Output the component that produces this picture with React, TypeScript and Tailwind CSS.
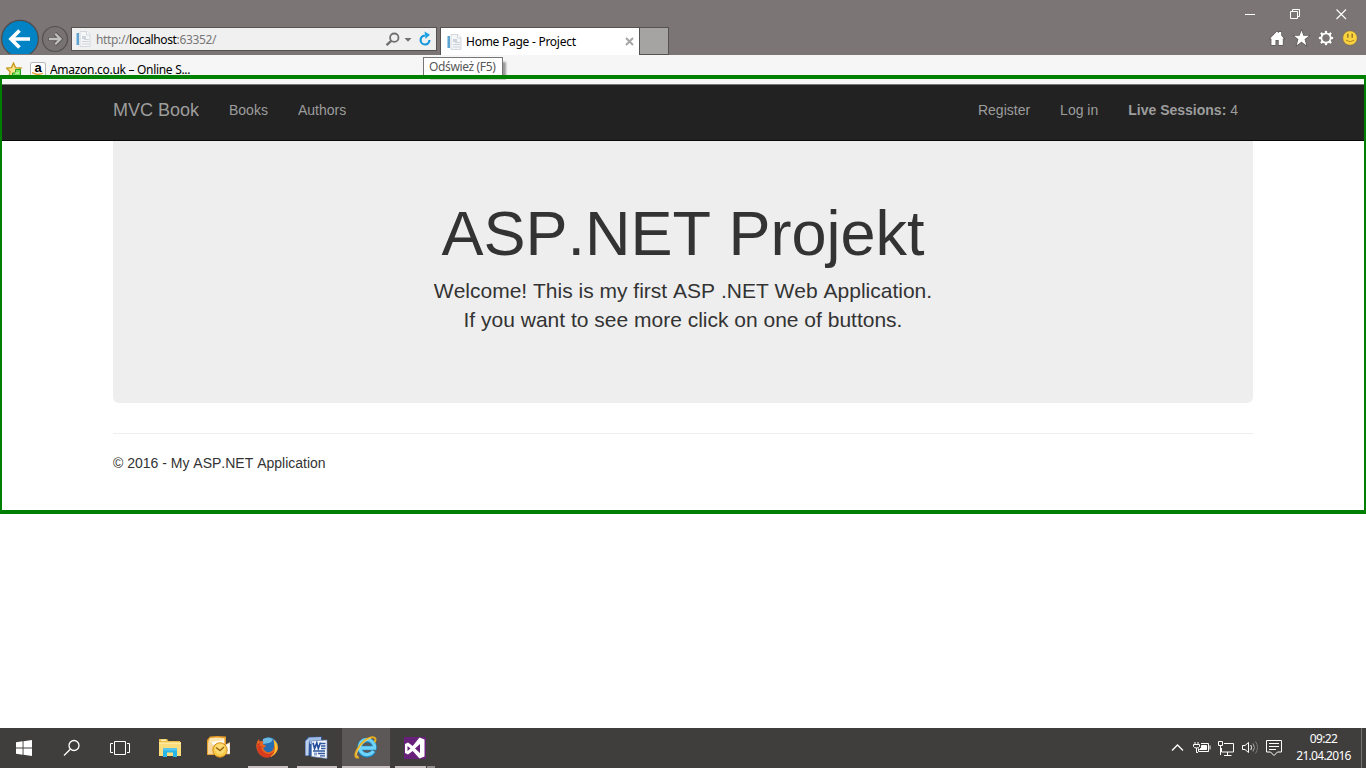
import React from "react";

const UI = "font-['Noto_Sans','Open_Sans',sans-serif]";

function PageIcon() {
  return (
    <svg width="16" height="16" viewBox="0 0 16 16" className="block shrink-0">
      <path d="M5 .5h7l3 3v12H5z" fill="#f4f6f8" stroke="#d3d8de" />
      <path d="M11.500 .5v3.500h3.500" fill="#fff" stroke="#cfd5dc" />
      <path d="M1 2h3v12H1z" fill="#5ea3cf" />
      <path d="M1 2h1v12H1z" fill="#a9cfe8" />
      <path d="M7 5h4v3H7zM7 10h7v1H7zM7 12.500h7v1H7zM9 8h5v1H9z" fill="#cdd3da" />
    </svg>
  );
}

function BackIcon() {
  return (
    <svg width="40" height="36" viewBox="0 0 40 36" className="block shrink-0">
      <circle cx="20" cy="19.700" r="18.300" fill="#0083c5" stroke="#4f4b4b" strokeWidth="1.200" />
      <path d="M30 20H12M19.500 11.500L11 20l8.500 8.500" fill="none" stroke="#fff" strokeWidth="3.700" />
      <path d="M0 35.500h40" stroke="#7c7575" />
    </svg>
  );
}

function ForwardIcon() {
  return (
    <svg width="28" height="28" viewBox="0 0 28 28" className="block shrink-0">
      <circle cx="14" cy="14" r="12.500" fill="#787272" stroke="#545050" strokeWidth="1.200" />
      <path d="M7.500 14H19M14 8.500l5.500 5.500-5.500 5.500" fill="none" stroke="#575353" strokeWidth="4" />
      <path d="M8 14H19.500M14.200 8.800l5.300 5.200-5.300 5.200" fill="none" stroke="#c1bebe" strokeWidth="2.300" />
    </svg>
  );
}

function AddressIcons() {
  return (
    <svg width="51" height="22" viewBox="0 0 51 22" className="block shrink-0">
      <circle cx="9.300" cy="9.700" r="4.200" fill="none" stroke="#6f6f6f" strokeWidth="1.800" />
      <path d="M6.500 12.700L1.500 17.200" stroke="#6f6f6f" strokeWidth="2.400" />
      <path d="M19.500 10h7L23 13.800z" fill="#707070" />
      <path d="M39.800 7.700a4.400 4.400 0 1 0 4.600 4.300" fill="none" stroke="#1598db" strokeWidth="2.200" />
      <path d="M39.500 3.500l5.500 3.200-4.500 4z" fill="#1da3e5" />
    </svg>
  );
}

function WindowControls() {
  return (
    <svg width="106" height="12" viewBox="0 0 106 12" className="block" fill="none" stroke="#fff">
      <path d="M0 6.500h10" />
      <path d="M45.500 3.500h7v7h-7zM47.500 3.500v-2h7v7h-2" />
      <path d="M91.500 1.500l9.500 9.500M101 1.500L91.500 11" strokeWidth="1.100" />
    </svg>
  );
}

function ToolIcons() {
  return (
    <svg width="90" height="18" viewBox="0 0 90 18" className="block">
      <g fill="#fff" stroke="#5d5858" strokeWidth="1.400" style={{ paintOrder: "stroke" }}>
        <path d="M1 9.500L8 2.500l1.900 1.800V3H12.200v3.500l2.800 3h-1.200V16H9.700v-5H6.500v5H2.400V9.500z" />
        <path d="M32.500 1.500l1.900 5.200h5.600l-4.400 3.600 1.700 6-4.800-3.500-4.800 3.500 1.700-6L25 6.700h5.600z" />
      </g>
      <g stroke="#5d5858" strokeWidth="3.700">
        <path d="M57 1.500v15M49.500 9h15M51.700 3.700l10.600 10.600M62.300 3.700L51.700 14.300" />
      </g>
      <g stroke="#fff" strokeWidth="2.500">
        <path d="M57 1.800v14.400M49.800 9h14.400M51.900 3.900l10.200 10.200M62.100 3.900l-10.200 10.200" />
      </g>
      <circle cx="57" cy="9" r="4.500" fill="#7c7575" stroke="#fff" strokeWidth="2" />
      <circle cx="57" cy="9" r="3.500" fill="#7c7575" />
      <circle cx="81" cy="9" r="7.300" fill="#fbd33f" stroke="#77664f" strokeWidth=".7" />
      <path d="M78.800 4.700v4M83.200 4.700v4" stroke="#957928" strokeWidth="1.500" />
      <path d="M76.800 11.200q4.200 3 8.400 0" fill="none" stroke="#b38a23" />
    </svg>
  );
}

function FavoriteStar() {
  return (
    <svg width="17" height="15" viewBox="0 0 17 15" className="block shrink-0">
      <path d="M7.500 1l2 4.600 5.500.5-4.200 3.700 1.500 5.700-4.800-3-4.800 3 1.400-5.700L.5 6.100l5-.5z" fill="#fbe28a" stroke="#c59a20" strokeWidth="1.300" />
      <path d="M9.500 7.500h5v7h-8V11h3z" fill="#7ee25c" stroke="#25a01c" />
      <path d="M9 11h4" stroke="#d5ffc5" />
    </svg>
  );
}

function AmazonIcon() {
  return (
    <span className="block h-[16px] w-[16px] shrink-0 rounded-[2px] border border-[#b9b9b9] bg-white text-center font-['Liberation_Sans',sans-serif] text-[13px] leading-[9px] font-bold text-black">
      a
      <svg width="12" height="4" viewBox="0 0 12 4" className="mx-auto block">
        <path d="M0 .5q6 3.500 11 .5" fill="none" stroke="#ed9b31" strokeWidth="1.300" />
      </svg>
    </span>
  );
}

function WindowsIcon() {
  return (
    <svg width="16" height="16" viewBox="0 0 16 16">
      <path d="M0 2.200l6.600-.9v6.200H0zM7.500 1.200L16 0v7.500H7.500zM0 8.500h6.600v6.200L0 13.800zM7.500 8.500H16V16l-8.500-1.200z" fill="#fff" />
    </svg>
  );
}

function SearchIcon() {
  return (
    <svg width="18" height="18" viewBox="0 0 18 18" fill="none" stroke="#fff" strokeWidth="1.300">
      <circle cx="11" cy="6.500" r="5" />
      <path d="M7.300 10.200L1 16.500" />
    </svg>
  );
}

function TaskViewIcon() {
  return (
    <svg width="20" height="16" viewBox="0 0 20 16" fill="none" stroke="#fff">
      <path d="M4.500 1.500h11v13h-11zM3 3.500H.5v9H3M17 3.500h2.500v9H17" />
    </svg>
  );
}

function FolderIcon() {
  return (
    <svg width="22" height="20" viewBox="0 0 22 20">
      <path d="M0 1h8l1.500 2H21v15H0z" fill="#e9bd49" />
      <path d="M0 4h22v14H0z" fill="#fbdc7c" />
      <path d="M2 1.500h5V3H2z" fill="#f8eeb6" />
      <path d="M0 5h22v1H0z" fill="#fde9a2" />
      <path d="M4 10h14v9h-4v-4.500H8V19H4z" fill="#28b5e8" />
      <path d="M4 10h14v2.500H4z" fill="#55c5ee" />
    </svg>
  );
}

function OutlookIcon() {
  return (
    <svg width="24" height="24" viewBox="0 0 24 24">
      <path d="M4 .5q7-1 16 0V19H1V4z" fill="#e79a22" />
      <path d="M4 2q6-1 14.500 0v15H2.500V5z" fill="#fce5af" />
      <path d="M6 6l12-2v9H6z" fill="#fffaf0" />
      <path d="M2 6.500l11 5.500 11-5.500V18H2z" fill="#fff" stroke="#e0b969" strokeWidth=".6" />
      <path d="M2 7v11h6V10z" fill="#f9d79b" />
      <circle cx="14" cy="14" r="7.200" fill="#f8cb48" stroke="#d68b18" />
      <circle cx="14" cy="12.800" r="5.200" fill="#fbdb70" />
      <path d="M10 11.500l4 3 4-3.500" fill="none" stroke="#986315" strokeWidth="1.400" />
    </svg>
  );
}

function FirefoxIcon() {
  return (
    <svg width="24" height="24" viewBox="0 0 24 24">
      <circle cx="14" cy="10.500" r="9.300" fill="#266db1" />
      <path d="M8 3q5-3 10 0-1 3-4 4L8 8z" fill="#6bbbe3" />
      <path d="M1.500 8Q2 5 4 3l.5 2.500Q6.500 4.500 8.500 5.300L7.600 8l3.800 2-3.200 2Q10 17 15 16q4.500-2 4-8l1.500 2q0-4-2.500-7 5 3.500 5.200 9A10.800 11 0 1 1 1.500 8z" fill="#e56620" />
      <path d="M2.200 8l3-1.200L4.800 10l3 .5L6 12q2 5.500 8 6 5-1 7-5-1.500 8-8.500 8.800Q1 21 2.200 8z" fill="#d63d1f" />
      <path d="M18.500 3.500Q23 7 22.500 13q-2 6-7.500 8 5.500-4.500 5-9z" fill="#fbc532" />
    </svg>
  );
}

function WordIcon() {
  return (
    <svg width="24" height="24" viewBox="0 0 24 24">
      <path d="M4 1l14-.5 1 18L1 20V4.500z" fill="#2f589f" />
      <path d="M4.500 1.500l12.500-.5V8H6z" fill="#9ebbe3" />
      <path d="M1.500 5L5 2 4.500 19.500h-3z" fill="#bed0eb" />
      <path d="M7.500 5l15.500-1v18.500l-15.500-2z" fill="#f8faff" stroke="#6c88ba" strokeWidth=".7" />
      <path d="M9 6.800l1.600 5.700 2.200-5.500 1.500 5.500 2.200-6" fill="none" stroke="#254f9d" strokeWidth="1.700" />
      <path d="M17 7.500h4.500M17 10h4.500M17 12.500h4.500M9 15h12M14 17.500h7M16 19.800h5" stroke="#2f589f" strokeWidth="1.300" />
      <path d="M10 16.500h3v3h-3z" fill="#8aa5d0" />
    </svg>
  );
}

function ExplorerIcon() {
  return (
    <svg width="24" height="24" viewBox="0 0 24 24">
      <path d="M19.700 15A7.500 7.500 0 1 1 20.500 12H7" fill="none" stroke="#1689c8" strokeWidth="4.600" />
      <path d="M19.500 15A7.500 7.500 0 1 1 20.500 12H7" fill="none" stroke="#6fd2f8" strokeWidth="3.300" />
      <path d="M5 21.500Q-1 22.500 3 14 9 3 18 1.300q5-.5 2.700 5" fill="none" stroke="#e6ad1d" strokeWidth="2" />
      <path d="M4 20.500Q1 20 4 14 10 4 17 2" fill="none" stroke="#ffe079" strokeWidth=".8" />
    </svg>
  );
}

function StudioIcon() {
  return (
    <svg width="22" height="22" viewBox="0 0 22 22">
      <path d="M0 0h22v22H0z" fill="#68217a" />
      <path d="M15.500 .5L20.500 2.500v17l-5 2L8.700 14 4 17.500l-3-1.500V7l3-1.500 4.700 3.500zM16 7l-5 4.500 5 4.500zM3.500 9v5L6.500 11.500z" fill="#fff" fillRule="evenodd" />
    </svg>
  );
}

function TrayIcons() {
  return (
    <svg width="112" height="20" viewBox="0 0 112 20" className="block" fill="none" stroke="#fff">
      <path d="M2 12.500L7.500 7l5.500 5.500" strokeWidth="1.300" />
      <path d="M25 4v2.500M28 4v2.500M23.500 6.500h6v2q-.7 1.500-3 1.500t-3-1.500zM26.500 10v4.500H28" />
      <path d="M31 5.500h7.500v8H28.500v-3M40 7.500v4" />
      <path d="M31.500 7.500h5v4h-7l2-2z" fill="#fff" />
      <path d="M54 5.500h9.500v8.500H51.500V10M48.500 3.500h4v4h-4zM50.500 7.500V17M57.500 14v3M54 17.500h7.500" />
      <path d="M72.500 7.500h2.500l3.500-3v10l-3.500-3h-2.500z" />
      <path d="M80.800 7q1.600 2.500 0 5" />
      <path d="M83 5.500q3 4 0 8" stroke="#aaa" />
      <path d="M85.500 3.500q4 6 0 12" stroke="#7b7979" />
      <path d="M96.500 2.500h15v11.500h-4L104 17.500 100.500 14h-4z" />
      <path d="M99 5.500h10M99 8.500h10M99 11.500h7" />
    </svg>
  );
}

function TaskButton({ children, wide = false, className = "" }: { children: React.ReactNode; wide?: boolean; className?: string }) {
  return (
    <div className={`relative flex h-10 items-center justify-center ${wide ? "w-[49px]" : "w-12"} ${className}`}>
      {children}
    </div>
  );
}

export default function App() {
  return (
    <div className="flex h-[768px] w-[1366px] flex-col overflow-hidden bg-white font-['Liberation_Sans',sans-serif]">
      <header className={`flex h-[55px] shrink-0 bg-[#7c7575] ${UI}`}>
        <div className="flex h-full items-end">
          <BackIcon />
          <div className="mb-[2px] w-[31px] pl-px"><ForwardIcon /></div>
          <div className="mb-[4px] flex h-[24px] w-[366px] items-center border border-[#565252] bg-[#f0f0f0]">
            <div className="ml-[3px]"><PageIcon /></div>
            <span className="ml-[5px] pt-[2px] text-[12px] leading-[22px] tracking-[-0.36px] text-[#777]">
              http://<span className="text-black">localhost</span>:63352/
            </span>
            <div className="ml-auto"><AddressIcons /></div>
          </div>
          <div className="ml-[3px] flex h-[28px] w-[200px] items-center border border-b-0 border-[#565252] bg-white">
            <div className="ml-[5px]"><PageIcon /></div>
            <span className="ml-[4px] text-[12px] leading-[22px] tracking-[-0.26px] text-black">Home Page - Project</span>
            <svg width="9" height="9" viewBox="0 0 9 9" className="mr-[5px] ml-auto">
              <path d="M1 1l7 7M8 1L1 8" stroke="#a6a6a6" strokeWidth="2" />
            </svg>
          </div>
          <div className="h-[28px] w-[29px] border border-l-0 border-[#565252] bg-[#a5a4a3]" />
        </div>
        <div className="ml-auto flex flex-col items-end">
          <div className="mt-[8px] mr-[15px]"><WindowControls /></div>
          <div className="mt-[9px] mr-[7px]"><ToolIcons /></div>
        </div>
      </header>

      <div className={`relative flex h-5 shrink-0 overflow-hidden bg-[#f6f6f6] ${UI}`}>
        <div className="mt-[7px] ml-[6px]"><FavoriteStar /></div>
        <div className="mt-[7px] ml-[7px]"><AmazonIcon /></div>
        <span className="mt-[10px] ml-[4px] h-[10px] text-[12px] leading-[10px] tracking-[-0.3px] text-black">Amazon.co.uk – Online S...</span>
        <div className="absolute top-[2px] left-[423px] h-[23px] w-[80px] border border-[#767676] bg-white pl-[5px] text-[12px] leading-[18px] tracking-[-0.36px] whitespace-nowrap text-[#575757] shadow-[3px_5px_2px_#999]">
          Odśwież (F5)
        </div>
      </div>

      <div className="flex h-[439px] shrink-0 flex-col border-x-2 border-y-4 border-[#008000] bg-white">
        <div className="flex h-[6px] shrink-0 border-b border-[#777] bg-[#f8f8f8]">
          <div className="ml-[428px] h-[1px] w-[76px] bg-[#d0d0d0]" />
        </div>
        <nav className="flex h-14 shrink-0 items-start border-b border-[#080808] bg-[#222] pt-[15px] text-[14px] leading-5 text-[#9d9d9d]">
          <span className="ml-[111px] w-[116px] text-[18px]">MVC Book</span>
          <span className="w-[69px]">Books</span>
          <span>Authors</span>
          <div className="mr-[126px] ml-auto flex gap-[30px]">
            <span>Register</span>
            <span>Log in</span>
            <span><b>Live Sessions:</b> 4</span>
          </div>
        </nav>
        <main className="mx-[111px] [font-kerning:none]">
          <section className="h-[262px] rounded-b-[6px] bg-[#eee] pt-[57px] text-center text-[#333]">
            <h1 className="text-[63px] leading-[70px]">ASP.NET Projekt</h1>
            <p className="mt-[8px] text-[21px] leading-[29px]">
              Welcome! This is my first ASP .NET Web Application.
              <br />
              If you want to see more click on one of buttons.
            </p>
          </section>
          <footer className="mt-[30px] border-t border-[#eee] pt-[19px] text-[14px] leading-5 text-[#333]">
            © 2016 - My ASP.NET Application
          </footer>
        </main>
      </div>

      <div className={`mt-auto flex h-10 shrink-0 bg-[#403e3d] ${UI}`}>
        <TaskButton><WindowsIcon /></TaskButton>
        <TaskButton><SearchIcon /></TaskButton>
        <TaskButton><TaskViewIcon /></TaskButton>
        <TaskButton className="ml-[2px]"><FolderIcon /></TaskButton>
        <TaskButton><OutlookIcon /></TaskButton>
        <TaskButton wide>
          <FirefoxIcon />
          <i className="absolute bottom-0 left-[6px] h-[2px] w-10 bg-[#c8bfbf]" />
        </TaskButton>
        <TaskButton wide>
          <WordIcon />
          <i className="absolute bottom-0 left-[6px] h-[2px] w-10 bg-[#c8bfbf]" />
        </TaskButton>
        <TaskButton className="ml-[2px] bg-[#5d5858]">
          <ExplorerIcon />
          <i className="absolute bottom-0 left-0 h-[2px] w-12 bg-[#c8bfbf]" />
        </TaskButton>
        <TaskButton wide>
          <StudioIcon />
          <i className="absolute bottom-0 left-[5px] h-[2px] w-[31px] bg-[#c8bfbf]" />
          <i className="absolute bottom-0 left-[37px] h-[2px] w-[8px] bg-[#938d8d]" />
        </TaskButton>
        <div className="mt-[10px] ml-auto"><TrayIcons /></div>
        <div className="mt-[2px] ml-[9px] w-[65px] text-center text-[12px] leading-[17px] tracking-[-0.68px] whitespace-nowrap text-white">
          <div>09:22</div>
          <div>21.04.2016</div>
        </div>
        <div className="mr-1 ml-[5px] w-px bg-[#777474]" />
      </div>
    </div>
  );
}
